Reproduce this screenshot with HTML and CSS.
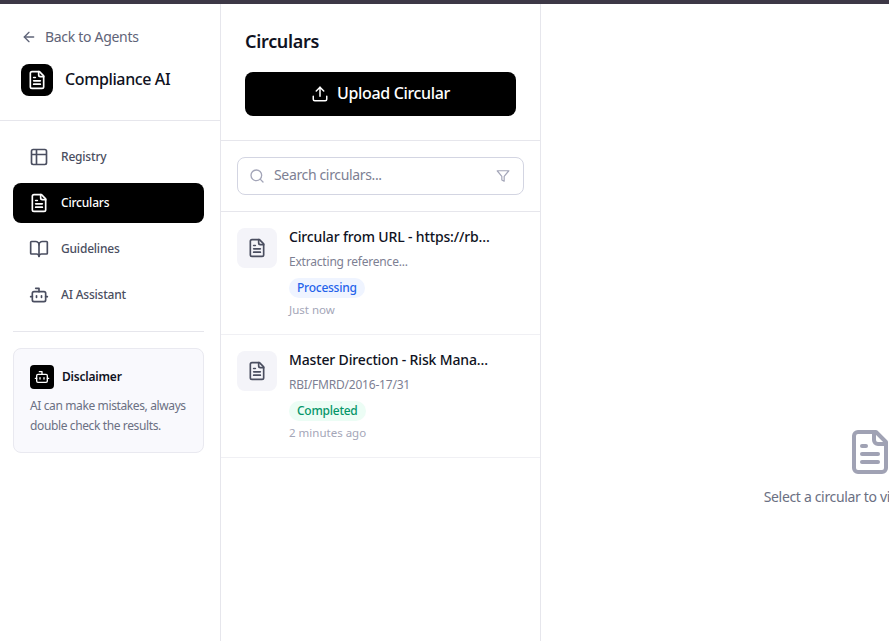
FILE: index.html
```html
<!DOCTYPE html>
<html lang="en">
<head>
<meta charset="utf-8">
<title>Compliance AI</title>
<link rel="stylesheet" href="styles.css">
</head>
<body>
<svg class="sprite" aria-hidden="true">
  <symbol id="i-file" viewBox="0 0 24 24"><path d="M15 2H6a2 2 0 0 0-2 2v16a2 2 0 0 0 2 2h12a2 2 0 0 0 2-2V7Z"/><path d="M14 2v4a2 2 0 0 0 2 2h4"/><path d="M10 9H8"/><path d="M16 13H8"/><path d="M16 17H8"/></symbol>
  <symbol id="i-bot" viewBox="0 0 24 24"><path d="M12 8V4H8"/><rect width="16" height="12" x="4" y="8" rx="2"/><path d="M2 14h2"/><path d="M20 14h2"/><path d="M15 13v2"/><path d="M9 13v2"/></symbol>
</svg>
<div class="topbar"></div>
<div class="app">
  <aside class="sidebar">
    <header class="brand">
      <a class="back"><svg class="ic ic16" viewBox="0 0 24 24"><path d="m12 19-7-7 7-7"/><path d="M19 12H5"/></svg><span>Back to Agents</span></a>
      <div class="logo-row">
        <span class="logo"><svg class="ic ic20"><use href="#i-file"/></svg></span>
        <span class="logo-name">Compliance AI</span>
      </div>
    </header>
    <nav class="nav">
      <a class="nav-item"><svg class="ic ic20" viewBox="0 0 24 24"><path d="M9 3H5a2 2 0 0 0-2 2v4m6-6h10a2 2 0 0 1 2 2v4M9 3v18m0 0h10a2 2 0 0 0 2-2V9M9 21H5a2 2 0 0 1-2-2V9m0 0h18"/></svg><span class="nav-label">Registry</span></a>
      <a class="nav-item active"><svg class="ic ic20"><use href="#i-file"/></svg><span class="nav-label">Circulars</span></a>
      <a class="nav-item"><svg class="ic ic20" viewBox="0 0 24 24"><path d="M12 7v14"/><path d="M3 18a1 1 0 0 1-1-1V4a1 1 0 0 1 1-1h5a4 4 0 0 1 4 4 4 4 0 0 1 4-4h5a1 1 0 0 1 1 1v13a1 1 0 0 1-1 1h-6a3 3 0 0 0-3 3 3 3 0 0 0-3-3z"/></svg><span class="nav-label">Guidelines</span></a>
      <a class="nav-item"><svg class="ic ic20"><use href="#i-bot"/></svg><span class="nav-label">AI Assistant</span></a>
    </nav>
    <div class="disclaimer-wrap">
      <section class="disclaimer">
        <div class="disclaimer-head">
          <span class="disclaimer-icon"><svg class="ic ic16"><use href="#i-bot"/></svg></span>
          <span class="disclaimer-title">Disclaimer</span>
        </div>
        <p class="disclaimer-text">AI can make mistakes, always double check the results.</p>
      </section>
    </div>
  </aside>
  <section class="list-panel">
    <header class="list-head">
      <h1 class="list-title">Circulars</h1>
      <button class="upload"><svg class="ic ic18" viewBox="0 0 24 24"><path d="M21 15v4a2 2 0 0 1-2 2H5a2 2 0 0 1-2-2v-4"/><polyline points="17 8 12 3 7 8"/><line x1="12" y1="3" x2="12" y2="15"/></svg><span class="upload-label">Upload Circular</span></button>
    </header>
    <div class="search-wrap">
      <div class="search">
        <svg class="ic ic16 search-ic" viewBox="0 0 24 24"><circle cx="11" cy="11" r="8"/><path d="m21 21-4.3-4.3"/></svg>
        <span class="search-text">Search circulars...</span>
        <svg class="ic ic14 search-ic" viewBox="0 0 24 24"><polygon points="22 3 2 3 10 12.46 10 19 14 21 14 12.46 22 3"/></svg>
      </div>
    </div>
    <article class="item">
      <span class="item-icon"><svg class="ic ic20"><use href="#i-file"/></svg></span>
      <div class="item-body">
        <div class="item-title">Circular from URL - https://rbi.org.in/notification</div>
        <div class="item-sub">Extracting reference...</div>
        <span class="badge badge-blue">Processing</span>
        <div class="item-time">Just now</div>
      </div>
    </article>
    <article class="item">
      <span class="item-icon"><svg class="ic ic20"><use href="#i-file"/></svg></span>
      <div class="item-body">
        <div class="item-title">Master Direction - Risk Management and Inter-Bank Dealings</div>
        <div class="item-sub">RBI/FMRD/2016-17/31</div>
        <span class="badge badge-green">Completed</span>
        <div class="item-time">2 minutes ago</div>
      </div>
    </article>
  </section>
  <main class="detail">
    <svg class="ic ic48"><use href="#i-file"/></svg>
    <p class="detail-text">Select a circular to view the details</p>
  </main>
</div>
</body>
</html>
```
FILE: styles.css
```css
* { box-sizing: border-box; }
html, body { margin: 0; height: 100%; overflow: hidden; background: #fff; }
body { font-family: "Noto Sans", "Open Sans", sans-serif; color: #111827; }
.sprite { display: none; }
.topbar { height: 4px; background: #3d3846; }
.app { display: flex; width: 1199px; height: 927px; }
.ic { fill: none; stroke: currentColor; stroke-width: 2; stroke-linecap: round; stroke-linejoin: round; flex: none; }
.ic14 { width: 14px; height: 14px; }
.ic16 { width: 16px; height: 16px; }
.ic18 { width: 18px; height: 18px; }
.ic20 { width: 20px; height: 20px; }
.ic48 { width: 48px; height: 48px; }

.sidebar { flex: 0 0 221px; border-right: 1px solid #e6e6ec; display: flex; flex-direction: column; }
.brand { height: 117px; border-bottom: 1px solid #e6e6ec; padding: 23px 21px 0; }
.back { display: flex; align-items: center; gap: 8px; color: #5f6478; font-size: 14px; line-height: 20px; letter-spacing: -0.3px; }
.logo-row { display: flex; align-items: center; gap: 12px; margin-top: 17px; }
.logo { width: 32px; height: 32px; border-radius: 8px; background: #000; color: #fff; display: flex; align-items: center; justify-content: center; }
.logo-name { font-size: 16px; font-weight: 500; line-height: 24px; padding-bottom: 2px; letter-spacing: -0.38px; color: #0f1222; }
.nav { padding: 16px 16px 16px 13px; display: flex; flex-direction: column; gap: 6px; }
.nav-item { height: 40px; padding: 0 16px; border-radius: 8px; display: flex; align-items: center; gap: 12px; font-size: 12px; font-weight: 500; color: #4a4e60; letter-spacing: -0.2px; }
.nav-label { padding-bottom: 2px; }
.nav-item.active { background: #000; color: #fff; }
.disclaimer-wrap { margin: 0 16px 0 13px; border-top: 1px solid #e6e6ec; padding-top: 16px; }
.disclaimer { height: 105px; border: 1px solid #e9e9f0; border-radius: 8px; background: #f9f9fd; padding: 16px; }
.disclaimer-head { display: flex; align-items: center; gap: 8px; }
.disclaimer-icon { width: 24px; height: 24px; border-radius: 4px; background: #000; color: #fff; display: flex; align-items: center; justify-content: center; }
.disclaimer-title { font-size: 12px; font-weight: 600; color: #0f1222; letter-spacing: -0.2px; padding-bottom: 2px; }
.disclaimer-text { margin: 7px 0 0; font-size: 12px; line-height: 19.5px; color: #6b7083; letter-spacing: -0.38px; }

.list-panel { flex: 0 0 320px; border-right: 1px solid #e6e6ec; display: flex; flex-direction: column; }
.list-head { height: 137px; border-bottom: 1px solid #e6e6ec; padding: 24px 24px 0; }
.list-title { margin: 0; font-size: 18px; line-height: 26px; font-weight: 600; color: #0f1222; letter-spacing: -0.3px; }
.upload { margin-top: 18px; width: 271px; height: 44px; border: 0; border-radius: 8px; background: #000; color: #fff; display: flex; align-items: center; justify-content: center; gap: 8px; font: 500 16px/24px "Noto Sans", sans-serif; letter-spacing: -0.35px; }
.upload-label { padding-bottom: 2px; }
.search-wrap { height: 71px; padding: 16px; border-bottom: 1px solid #e6e6ec; }
.search { height: 38px; border: 1px solid #d3d5e2; border-radius: 8px; display: flex; align-items: center; padding: 0 13px 0 11px; gap: 9px; color: #a3a5b8; }
.search-text { flex: 1; font-size: 14px; color: #7d8093; letter-spacing: -0.35px; padding-bottom: 3px; }
.item { height: 123px; border-bottom: 1px solid #f0f0f4; padding: 16px; display: flex; gap: 12px; }
.item-icon { width: 40px; height: 40px; border-radius: 8px; background: #f4f4f9; color: #4a4e60; display: flex; align-items: center; justify-content: center; flex: none; }
.item-body { min-width: 0; width: 203px; }
.item-title { font-size: 14px; font-weight: 500; line-height: 18px; color: #0f1222; white-space: nowrap; overflow: hidden; text-overflow: ellipsis; letter-spacing: -0.15px; }
.item-sub { margin-top: 8px; font-size: 12px; line-height: 16px; color: #7d8093; letter-spacing: -0.2px; }
.badge { display: block; width: max-content; margin-top: 8px; height: 20px; padding: 0 8px; border-radius: 10px; font-size: 12px; line-height: 20px; font-weight: 500; letter-spacing: -0.25px; }
.badge-blue { background: #eff4ff; color: #2563eb; }
.badge-green { background: #ecfdf5; color: #059669; }
.item-time { margin-top: 4px; font-size: 11.5px; line-height: 16px; color: #a4a6b8; }

.detail { flex: 1; display: flex; flex-direction: column; align-items: center; justify-content: center; color: #a0a2b4; }
.detail-text { margin: 11px 0 0; font-size: 14px; line-height: 20px; color: #6b7083; white-space: nowrap; letter-spacing: -0.33px; }
```
